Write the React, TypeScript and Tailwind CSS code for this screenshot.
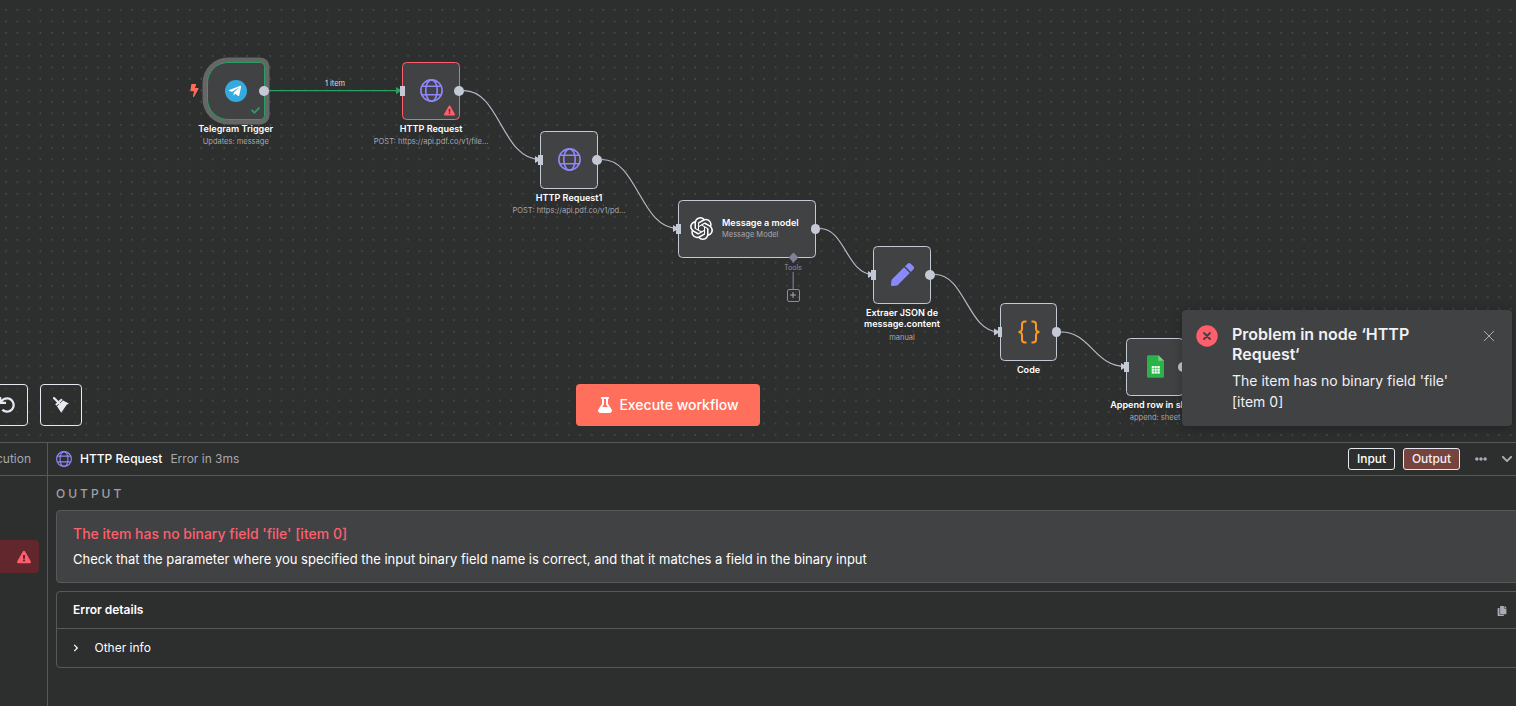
import type { ReactNode } from "react";
import {
  FaBolt,
  FaCheck,
  FaChevronDown,
  FaChevronRight,
  FaCopy,
  FaEllipsisH,
  FaExclamationTriangle,
  FaFlask,
  FaPen,
  FaTelegramPlane,
  FaUndo,
} from "react-icons/fa";
import { SiOpenai } from "react-icons/si";

function Globe({ className }: { className: string }) {
  return (
    <svg viewBox="0 0 24 24" fill="none" stroke="#8f87f7" strokeWidth="1.7" className={className}>
      <circle cx="12" cy="12" r="11.1" />
      <ellipse cx="12" cy="12" rx="6" ry="11.1" />
      <path d="M1.9 7.6h20.2M1.9 16.4h20.2" />
    </svg>
  );
}

function Broom() {
  return (
    <svg viewBox="0 0 16 16" className="size-4" fill="#e6e9f2">
      <path d="M1 1l5 5" stroke="#e6e9f2" strokeWidth="2.200" strokeLinecap="round" />
      <path d="M8.200 1.500l1.500 1.400-6.100 5.900-1.400-1.500z" />
      <path d="M10 3.500l6 3-2.300 1.300-5.500 8-4.200-6.500z" />
    </svg>
  );
}

function SheetIcon() {
  return (
    <svg viewBox="0 0 18 24" className="h-[23px] w-[17px]">
      <path d="M1.5 0H12l6 6v16.500a1.500 1.500 0 0 1-1.500 1.500h-15A1.500 1.500 0 0 1 0 22.500v-21A1.500 1.500 0 0 1 1.500 0z" fill="#28b446" />
      <path d="M12 0l6 6h-6z" fill="#7ace87" />
      <path d="M5 11.500h8.500v8H5z" fill="#fff" />
      <path d="M5 14.200h8.500M5 16.900h8.500M7.800 11.500v8M10.700 11.500v8" stroke="#28b446" strokeWidth=".6" />
    </svg>
  );
}

function OutPort() {
  return <span className="absolute top-[23px] right-[-5px] size-[9.500px] rounded-full bg-[#c3c9d5]" />;
}

function InPort() {
  return <span className="absolute top-[23px] left-[-3px] h-[10px] w-[4.500px] bg-[#c3c9d5]" />;
}

function Node({
  className,
  box = "rounded-[4.500px] border-[#c3c9d5]",
  title,
  subtitle,
  input = true,
  badge,
  children,
}: {
  className: string;
  box?: string;
  title: ReactNode;
  subtitle?: string;
  input?: boolean;
  badge?: ReactNode;
  children: ReactNode;
}) {
  return (
    <div className={`absolute flex w-[57.500px] flex-col items-center ${className}`}>
      <div className={`relative flex size-[57.500px] shrink-0 items-center justify-center border bg-[#414244] ${box}`}>
        {children}
        {input && <InPort />}
        <OutPort />
        {badge}
      </div>
      <div className="mt-[3px] text-center text-[9.050px] leading-[11.500px] font-semibold whitespace-nowrap text-white">
        {title}
      </div>
      {subtitle && (
        <div className="mt-[3px] text-center text-[7.500px] leading-[10px] whitespace-nowrap text-[#a6a8ae]">{subtitle}</div>
      )}
    </div>
  );
}

function Connections() {
  return (
    <svg className="absolute inset-0 h-full w-full" fill="none">
      <defs>
        <pattern id="dots" x="0" y="4.300" width="11.487" height="11.487" patternUnits="userSpaceOnUse">
          <circle cx="5.900" cy="5.740" r=".6" fill="#6f7174" />
        </pattern>
        <marker id="arrow" markerUnits="userSpaceOnUse" markerWidth="8" markerHeight="8" refX="5" refY="4" orient="0">
          <path d="M0 .6v6.800L6 4z" fill="#c3c9d5" />
        </marker>
      </defs>
      <rect width="100%" height="100%" fill="url(#dots)" />
      <path d="M269 90.600H398" stroke="#28a062" strokeWidth="1.300" />
      <path d="M396 86.900v7.400L402 90.600z" fill="#28a062" />
      <g stroke="#b6bac6" strokeWidth="1.150">
        <path d="M464 90.600C500 90.600 502 159.500 540 159.500" markerEnd="url(#arrow)" />
        <path d="M602 159.500C638 159.500 640 228.500 678 228.500" markerEnd="url(#arrow)" />
        <path d="M820 228.500C845 228.500 847 274.500 873 274.500" markerEnd="url(#arrow)" />
        <path d="M935 274.500C965 274.500 968 332 999 332" markerEnd="url(#arrow)" />
        <path d="M1061 332C1091 332 1094 366.500 1126 366.500" markerEnd="url(#arrow)" />
      </g>
      <path d="M793.200 258V289" stroke="#75718c" strokeWidth="1.300" />
    </svg>
  );
}

function Canvas() {
  return (
    <section className="relative h-[442px] shrink-0 overflow-hidden">
      <Connections />
      <div className="absolute top-[78.500px] left-[322px] w-[26px] text-center text-[7.400px] leading-[10px] whitespace-nowrap text-[#dcdee5]">
        1 item
      </div>
      <FaBolt className="absolute top-[84px] left-[188px] size-[13px] text-[#ff6d5a]" />

      <Node
        className="top-[62px] left-[207px]"
        box="rounded-[4.500px] rounded-l-[21px] border-[#28a062] shadow-[0_0_0_4.500px_#656666]"
        title="Telegram Trigger"
        subtitle="Updates: message"
        input={false}
        badge={<FaCheck className="absolute right-[4px] bottom-[4px] size-[9px] text-[#28a062]" />}
      >
        <span className="flex size-[22.500px] items-center justify-center rounded-full bg-[#34aadf]">
          <FaTelegramPlane className="mr-px size-[14px] text-white" />
        </span>
      </Node>
      <Node
        className="top-[62px] left-[402.400px]"
        box="rounded-[4.500px] border-[#ff5f6d]"
        title="HTTP Request"
        subtitle="POST: https://api.pdf.co/v1/file..."
        badge={<FaExclamationTriangle className="absolute right-[3.500px] bottom-[3px] size-[11px] text-[#ff5f6d]" />}
      >
        <Globe className="size-[23px]" />
      </Node>
      <Node className="top-[131px] left-[540.300px]" title="HTTP Request1" subtitle="POST: https://api.pdf.co/v1/pd...">
        <Globe className="size-[23px]" />
      </Node>

      <div className="absolute top-[200px] left-[678px] flex h-[57.500px] w-[138px] items-center rounded-[4.500px] border border-[#c3c9d5] bg-[#414244] pl-[11px]">
        <SiOpenai className="size-[23px] text-white" />
        <div className="ml-[9px] flex flex-col gap-[2px] whitespace-nowrap">
          <span className="text-[9.050px] leading-[11px] font-semibold text-white">Message a model</span>
          <span className="text-[7.500px] leading-[10px] text-[#a6a8ae]">Message Model</span>
        </div>
        <InPort />
        <OutPort />
        <span className="absolute right-[18.500px] bottom-[-4px] size-[7px] rotate-45 bg-[#837f9b]" />
      </div>
      <div className="absolute top-[263px] left-[777.500px] w-[31px] text-center text-[7.200px] leading-[9px] text-[#8e8aa5]">
        <span className="bg-[#2d2e2e]">Tools</span>
      </div>
      <div className="absolute top-[289px] left-[787px] flex size-[12.500px] items-center justify-center rounded-[2px] border border-[#8e8aa5]">
        <svg viewBox="0 0 8 8" className="size-[8px]" stroke="#a8a8b4">
          <path d="M4 1v6M1 4h6" />
        </svg>
      </div>

      <Node
        className="top-[246px] left-[873.300px]"
        title={
          <>
            Extraer JSON de
            <br />
            message.content
          </>
        }
        subtitle="manual"
      >
        <FaPen className="size-[23px] text-[#8989ff]" />
      </Node>
      <Node className="top-[303px] left-[999.800px]" title="Code">
        <svg viewBox="0 0 24 24" className="size-[24px]" fill="none" stroke="#ff9922" strokeWidth="2">
          <path d="M9.500 1.500H8Q5 1.500 5 4.500V8.500Q5 12 1.500 12Q5 12 5 15.500V19.500Q5 22.500 8 22.500H9.500" />
          <path d="M14.500 1.500H16Q19 1.500 19 4.500V8.500Q19 12 22.500 12Q19 12 19 15.500V19.500Q19 22.500 16 22.500H14.500" />
        </svg>
      </Node>
      <Node className="top-[338px] left-[1126.400px]" title="Append row in sheet" subtitle="append: sheet">
        <SheetIcon />
      </Node>

      <div className="absolute top-[384px] left-[-14px] flex gap-3">
        <button className="flex size-[42px] items-center justify-center rounded border border-[#e6e9f2] bg-[#2d2e2e]/50">
          <FaUndo className="size-4 text-[#e6e9f2]" />
        </button>
        <button className="flex size-[42px] items-center justify-center rounded border border-[#e6e9f2] bg-[#2d2e2e]/50">
          <Broom />
        </button>
      </div>
      <button className="absolute top-[384px] left-[576px] flex h-[42px] w-[184px] items-center justify-center gap-[6px] rounded bg-[#ff6f5c] text-sm font-medium text-white">
        <FaFlask className="size-4" />
        Execute workflow
      </button>

      <div className="absolute top-[310px] left-[1182px] flex h-[116px] w-[330px] rounded bg-[#414244] pt-[14px] pl-[14px] shadow-[0_2px_12px_rgba(0,0,0,0.25)]">
        <svg viewBox="0 0 22 22" className="mt-[1px] size-[22px] shrink-0">
          <circle cx="11" cy="11" r="10.700" fill="#ff5f6d" />
          <path d="M8 8l6 6M14 8l-6 6" stroke="#414244" strokeWidth="1.900" strokeLinecap="round" />
        </svg>
        <div className="ml-[14px] w-[226px] text-[#f0f1f5]">
          <h2 className="text-base leading-5 font-semibold">
            Problem in node ‘HTTP
            <br />
            Request‘
          </h2>
          <p className="mt-[6px] text-sm leading-[21px]">
            The item has no binary field 'file'
            <br />
            [item 0]
          </p>
        </div>
        <svg viewBox="0 0 10 10" className="mt-[7px] ml-[26px] size-[10px]" stroke="#a9acb5">
          <path d="M0 0l10 10M10 0L0 10" />
        </svg>
      </div>
    </section>
  );
}

function LogsPanel() {
  return (
    <section className="flex min-h-0 flex-1 border-t border-[#56585a] text-xs">
      <aside className="flex w-[48px] shrink-0 flex-col border-r border-[#56585a]">
        <div className="flex h-[33px] items-center justify-end border-b border-[#56585a] pr-4 text-[#a6a8ae]">Execution</div>
        <div className="mt-[64px] mr-2 flex h-[33px] items-center justify-end rounded-r bg-[#62272d] pr-2">
          <FaExclamationTriangle className="size-[14px] text-[#ff5f6d]" />
        </div>
      </aside>
      <div className="flex min-w-0 flex-1 flex-col">
        <header className="flex h-[33px] shrink-0 items-center border-b border-[#56585a] pl-2">
          <Globe className="size-4" />
          <span className="ml-2 font-medium text-white">HTTP Request</span>
          <span className="ml-2 text-[#a6a8ae]">Error in 3ms</span>
          <div className="ml-auto flex items-center">
            <button className="h-[22px] w-[47px] rounded-[3px] border border-[#e6e9f2] text-xs font-medium text-white">Input</button>
            <button className="ml-2 h-[22px] w-[57px] rounded-[3px] border border-[#e6e9f2] bg-[#76433d] text-xs font-medium text-[#f4f0f2]">
              Output
            </button>
            <FaEllipsisH className="ml-[15px] size-3 text-[#a9acb5]" />
            <FaChevronDown className="mr-[3px] ml-[14px] size-3 text-[#a9acb5]" />
          </div>
        </header>
        <div className="flex flex-col pl-2">
          <h3 className="mt-[9px] leading-[18px] font-medium tracking-[3px] text-[#a0a2a8]">OUTPUT</h3>
          <div className="mt-[7px] mr-[-4px] flex h-[73px] flex-col rounded border border-[#56585a] bg-[#414244] pt-[13px] pl-4">
            <h4 className="text-sm leading-5 font-medium text-[#ff5f6d]">The item has no binary field 'file' [item 0]</h4>
            <p className="mt-[6px] text-[13px] leading-[18px] text-white">
              Check that the parameter where you specified the input binary field name is correct, and that it matches a field in the
              binary input
            </p>
          </div>
          <div className="mt-2 mr-[-4px] flex h-[77px] flex-col rounded border border-[#56585a] text-xs text-white">
            <div className="flex h-[37px] items-center border-b border-[#56585a] pl-4">
              <span className="font-semibold">Error details</span>
              <FaCopy className="mt-px mr-[12px] ml-auto size-[10px] text-[#a9acb5]" />
            </div>
            <div className="flex flex-1 items-center pl-[15px]">
              <FaChevronRight className="size-[8px] shrink-0" />
              <span className="ml-[14.500px]">Other info</span>
            </div>
          </div>
        </div>
      </div>
    </section>
  );
}

export default function App() {
  return (
    <main className="flex h-[706px] w-[1516px] flex-col overflow-hidden bg-[#2d2e2e] font-['Inter',sans-serif]">
      <Canvas />
      <LogsPanel />
    </main>
  );
}
